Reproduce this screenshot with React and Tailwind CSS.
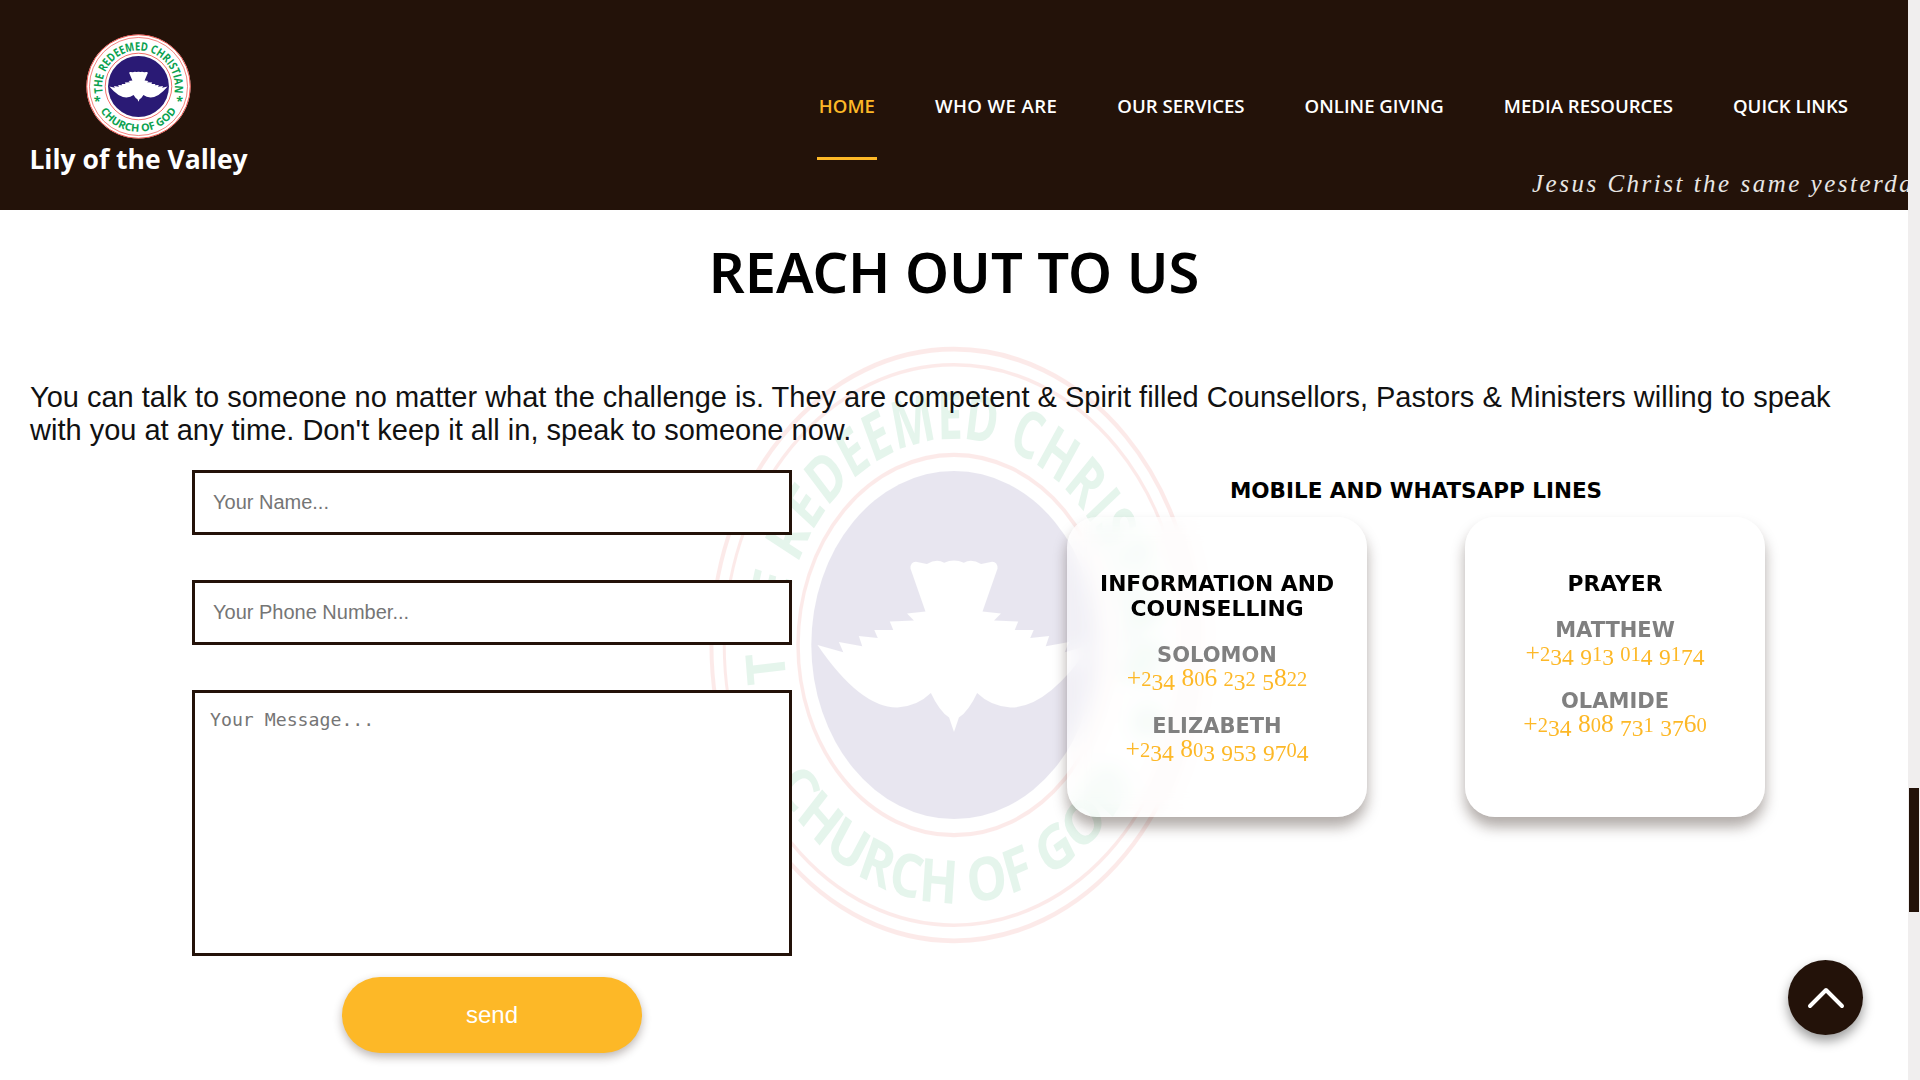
import React from "react";

const feathers = "M44.5 100 L55 102.4 L53.2 99 L62.7 100.4 L61.3 97 L69 97.7 L67.6 95 L75.3 95 L73.9 92.2 L83.7 91.8 L80.9 89.5 L88.4 88.8 L82.3 74.5 Q82.3 72 85 72.3 L89 73 Q93 71 96 72.6 Q100 71 104 72.6 Q107 71 111 73 L115 72.3 Q117.7 72 117.7 74.5 L111.6 88.8 L119.1 89.5 L116.3 91.8 L126.1 92.2 L124.7 95 L132.4 95 L131 97.7 L138.7 97 L137.3 100.4 L146.8 99 L145 102.4 L155.5 100 Q138 121 123 120.8 Q115 120.5 109.4 116 Q106 122 102 124.2 L100 129 L98 124.2 Q94 122 90.6 116 Q85 120.5 77 120.8 Q62 121 44.5 100 Z";

function Seal({ idTop, idBottom, className, disc }) {
  return (
    <svg viewBox="0 0 200 200" preserveAspectRatio="none" className={className}>
      <defs>
        <path id={idTop} d="M32 112 A69 69 0 1 1 168 112" />
        <path id={idBottom} d="M15.3 115 A86 86 0 0 0 184.7 115" />
      </defs>
      <circle cx="100" cy="100" r="99.2" fill={disc ? "#ffffff" : "none"} />
      <circle cx="100" cy="100" r="98.6" fill="none" stroke="#ec3b34" strokeWidth="1.6" />
      <circle cx="100" cy="100" r="93.4" fill="none" stroke="#ec3b34" strokeWidth="1.2" />
      <circle cx="100" cy="100" r="63.4" fill="none" stroke="#ec3b34" strokeWidth="1.4" />
      <circle cx="100" cy="100" r="58" fill="#2a1a75" />
      <path d={feathers} fill="#ffffff" />
      <text fill="#0aa14f" fontFamily="'Open Sans', sans-serif" fontWeight="700" fontSize="22" textAnchor="middle">
        <textPath href={`#${idTop}`} startOffset="50%" textLength="240" lengthAdjust="spacingAndGlyphs">THE REDEEMED CHRISTIAN</textPath>
      </text>
      <text fill="#0aa14f" fontFamily="'Open Sans', sans-serif" fontWeight="700" fontSize="20" textAnchor="middle">
        <textPath href={`#${idBottom}`} startOffset="50%" textLength="172" lengthAdjust="spacingAndGlyphs">CHURCH OF GOD</textPath>
      </text>
      <text x="15" y="138" fill="#0aa14f" fontFamily="'Open Sans', sans-serif" fontWeight="700" fontSize="24">*</text>
      <text x="172" y="138" fill="#0aa14f" fontFamily="'Open Sans', sans-serif" fontWeight="700" fontSize="24">*</text>
    </svg>
  );
}

function Phone({ number }) {
  return (
    <p className="-mt-[3px] font-['Liberation_Serif',serif] text-[25.5px] leading-[25px] text-[#fdb827]">
      {number.split("").map((c, i) => {
        if ("012".includes(c)) return <span key={i} className="text-[20.5px]">{c}</span>;
        if ("34579".includes(c)) return <span key={i} className="relative top-[4px] text-[23.5px]">{c}</span>;
        return <span key={i}>{c}</span>;
      })}
    </p>
  );
}

function Person({ name, number }) {
  return (
    <div className="mt-[22px]">
      <p className="font-['DejaVu_Sans',sans-serif] text-[21px] font-bold leading-[25px] text-[#808080]">{name}</p>
      <Phone number={number} />
    </div>
  );
}

function Card({ title, people }) {
  return (
    <div className="h-[300px] w-[300px] rounded-[30px] bg-white/40 px-[20px] pt-[54px] text-center shadow-[0_10px_14px_rgba(35,18,9,0.35)] backdrop-blur-[10px]">
      <h3 className="mb-[1px] font-['DejaVu_Sans',sans-serif] text-[21.8px] font-bold leading-[25px] text-black">{title}</h3>
      {people.map((p) => (
        <Person key={p.name} {...p} />
      ))}
    </div>
  );
}

export default function App() {
  const field =
    "block h-[65px] w-[600px] border-[3px] border-[#231209] bg-white px-[18px] font-['Liberation_Sans',sans-serif] text-[20px] outline-none placeholder:text-[#757575]";
  const item = "flex h-[160px] items-center px-[2px] pt-[52px]";
  return (
    <div className="flex h-[1080px] w-[1920px] overflow-hidden bg-white">
      <main className="relative h-full min-w-0 flex-1">
        <header className="flex h-[210px] bg-[#231209] pl-[30px]">
          <div className="flex w-[217px] flex-col items-center pt-[34px]">
            <Seal idTop="a1" idBottom="a2" disc className="h-[105px] w-[105px]" />
            <p className="mt-[1px] whitespace-nowrap font-['Open_Sans',sans-serif] text-[26.5px] font-bold leading-[38px] text-white">
              Lily of the Valley
            </p>
          </div>
          <div className="flex min-w-0 flex-1 flex-col">
            <nav className="flex h-[160px] items-start justify-end gap-[56px] pr-[58px] font-['Open_Sans',sans-serif] text-[18.6px] font-semibold text-white">
              <a className="flex h-[160px] items-center border-b-[3px] border-[#fdb827] px-[2px] pt-[55px] text-[#fdb827]">HOME</a>
              <a className={`${item} tracking-[0.4px]`}>WHO WE ARE</a>
              <a className={item}>OUR SERVICES</a>
              <a className={item}>ONLINE GIVING</a>
              <a className={item}>MEDIA RESOURCES</a>
              <a className={item}>QUICK LINKS</a>
            </nav>
            <div className="ml-auto mt-[9px] w-[376px] overflow-hidden whitespace-nowrap font-['Liberation_Serif',serif] text-[25px] italic leading-[30px] tracking-[2.5px] text-[#e8e6e4]">
              Jesus Christ the same yesterday, and to day, and for ever.
            </div>
          </div>
        </header>

        <section className="relative px-[30px]">
          <div className="pointer-events-none absolute left-[708px] top-[135px] opacity-[0.1]">
            <Seal idTop="b1" idBottom="b2" className="h-[600px] w-[492px]" />
          </div>
          <h1 className="relative pt-[30px] text-center font-['Noto_Sans',sans-serif] text-[56px] font-semibold leading-[62px] text-black">
            REACH OUT TO US
          </h1>
          <p className="relative mt-[79px] font-['Liberation_Sans',sans-serif] text-[29px] leading-[33px] text-[#111111]">
            You can talk to someone no matter what the challenge is. They are competent &amp; Spirit filled Counsellors, Pastors &amp; Ministers willing to speak with you at any time. Don't keep it all in, speak to someone now.
          </p>
          <div className="relative mt-[23px] grid grid-cols-2">
            <form className="flex flex-col items-center gap-[45px]">
              <input placeholder="Your Name..." className={field} />
              <input placeholder="Your Phone Number..." className={field} />
              <textarea
                placeholder="Your Message..."
                className="block h-[266px] w-[600px] resize-none border-[3px] border-[#231209] bg-white px-[15px] py-[13px] font-['DejaVu_Sans_Mono',monospace] text-[18.2px] outline-none placeholder:text-[#757575]"
              />
              <button
                type="button"
                className="-mt-[24px] h-[76px] w-[300px] rounded-full bg-[#fdb827] font-['Liberation_Sans',sans-serif] text-[24px] text-white shadow-[0_4px_10px_rgba(35,18,9,0.3)]"
              >
                send
              </button>
            </form>
            <div className="flex flex-col items-center">
              <h2 className="font-['DejaVu_Sans',sans-serif] text-[21.5px] font-bold leading-[42px] text-black">
                MOBILE AND WHATSAPP LINES
              </h2>
              <div className="mt-[5px] flex gap-[98px]">
                <Card
                  title="INFORMATION AND COUNSELLING"
                  people={[
                    { name: "SOLOMON", number: "+234 806 232 5822" },
                    { name: "ELIZABETH", number: "+234 803 953 9704" },
                  ]}
                />
                <Card
                  title="PRAYER"
                  people={[
                    { name: "MATTHEW", number: "+234 913 014 9174" },
                    { name: "OLAMIDE", number: "+234 808 731 3760" },
                  ]}
                />
              </div>
            </div>
          </div>
        </section>

        <button
          type="button"
          className="absolute bottom-[45px] right-[45px] flex h-[75px] w-[75px] items-center justify-center rounded-full bg-[#231209] shadow-[0_6px_12px_rgba(0,0,0,0.4)]"
        >
          <svg viewBox="0 0 40 24" className="h-[24px] w-[40px]" fill="none" stroke="#ffffff" strokeWidth="4" strokeLinecap="round" strokeLinejoin="round">
            <path d="M4 20 L20 4 L36 20" />
          </svg>
        </button>
      </main>
      <aside className="h-full w-[12px] shrink-0 bg-[#f0eeee] pl-[1px] pr-[1px] pt-[788px]">
        <div className="h-[124px] w-full bg-[#231209]" />
      </aside>
    </div>
  );
}
